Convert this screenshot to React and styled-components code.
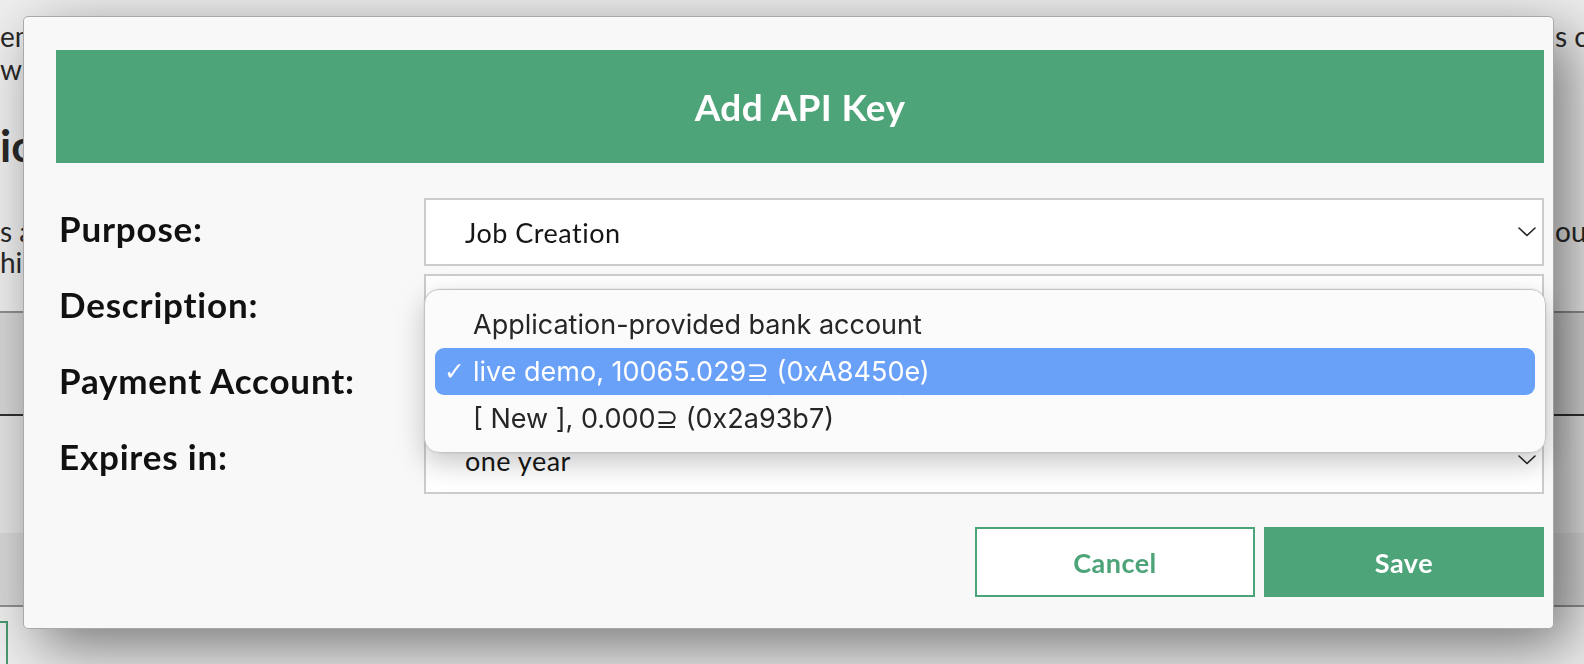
import React from "react";
import styled, { createGlobalStyle } from "styled-components";

const GlobalStyle = createGlobalStyle`
  html, body {
    margin: 0;
    padding: 0;
    height: 100%;
    overflow: hidden;
    background: #fff;
  }
  body {
    font-family: Lato, "Liberation Sans", sans-serif;
  }
`;

const green = "#4ea479";

/* ---------- page behind the dialog ---------- */

const Page = styled.div`
  width: 1584px;
  height: 664px;
  overflow: hidden;
  color: #2c2c2c;
  font-size: 28px;
  padding-top: 20px;
  box-sizing: border-box;
`;

const TextLine = styled.div`
  display: grid;
  grid-template-columns: 1555px 1fr;
  white-space: nowrap;
  overflow: hidden;
  line-height: ${(p) => p.$lh || 33}px;
  font-size: ${(p) => p.$size || 28}px;
  font-weight: ${(p) => (p.$bold ? 700 : 400)};
  margin-top: ${(p) => p.$mt || 0}px;
  span {
    overflow: hidden;
  }
`;

const TableTop = styled.div`
  margin-top: 33px;
  border-top: 2px solid #9a9a9a;
  height: 101px;
  background: #e6e6e6;
  border-bottom: 2px solid #333;
`;

const TableRow = styled.div`
  height: ${(p) => p.$h}px;
  background: ${(p) => p.$bg};
  border-bottom: ${(p) => (p.$line ? "2px solid #9a9a9a" : "none")};
`;

const PageButton = styled.div`
  margin-top: 14px;
  margin-left: -120px;
  width: 124px;
  height: 60px;
  border: 2px solid ${green};
  background: #fff;
`;

/* ---------- dialog ---------- */

const Backdrop = styled.div`
  position: fixed;
  inset: 0;
  background: rgba(0, 0, 0, 0.07);
`;

const Modal = styled.div`
  position: fixed;
  top: 16px;
  left: 23px;
  width: 1531px;
  box-sizing: border-box;
  background: #f8f8f8;
  border: 1px solid #a9a9a9;
  border-radius: 5px;
  padding: 33px 9px 31px 32px;
  box-shadow: 16px 18px 60px rgba(0, 0, 0, 0.5);
  display: flex;
  flex-direction: column;
`;

const Header = styled.div`
  height: 113px;
  background: ${green};
  color: #fff;
  font-weight: 700;
  font-size: 37px;
  letter-spacing: 0.4px;
  display: flex;
  align-items: center;
  justify-content: center;
`;

const Form = styled.div`
  margin-top: 35px;
  display: grid;
  grid-template-columns: 368px 1fr;
  row-gap: 8px;
`;

const Label = styled.div`
  display: flex;
  align-items: center;
  padding-left: 3px;
  font-weight: 700;
  font-size: 35px;
  letter-spacing: 0.8px;
  color: #111;
  padding-bottom: 8px;
`;

const Field = styled.div`
  position: relative;
  height: 68px;
  box-sizing: border-box;
  background: #fff;
  border: 2px solid #cbcbcb;
  display: flex;
  align-items: center;
  justify-content: space-between;
  padding: 0 6px 0 39px;
  font-size: 27px;
  letter-spacing: 0.5px;
  color: #161616;
`;

const Chevron = () => (
  <svg width="18" height="10" viewBox="0 0 18 10">
    <polyline
      points="1,1 9,8.5 17,1"
      fill="none"
      stroke="#222"
      strokeWidth="1.6"
      strokeLinecap="round"
      strokeLinejoin="round"
    />
  </svg>
);

const Menu = styled.div`
  position: absolute;
  top: -63px;
  left: -2px;
  width: 1122px;
  box-sizing: border-box;
  padding: 11px 10px 10px;
  background: rgba(251, 251, 251, 0.98);
  border: 1px solid #c4c4c4;
  border-radius: 15px;
  box-shadow: 0 10px 28px rgba(0, 0, 0, 0.22), 0 0 2px rgba(0, 0, 0, 0.15);
  font-family: Inter, "Noto Sans", "DejaVu Sans", sans-serif;
  font-size: 27px;
  letter-spacing: 0;
  z-index: 2;
`;

const MenuItem = styled.div`
  height: 47px;
  display: flex;
  align-items: center;
  padding-left: 9px;
  border-radius: 9px;
  color: ${(p) => (p.$active ? "#fff" : "#262626")};
  background: ${(p) => (p.$active ? "#69a0f8" : "transparent")};
  white-space: nowrap;
`;

const Check = styled.span`
  width: 29px;
  flex: none;
  font-family: "DejaVu Sans", sans-serif;
  font-size: 25px;
  font-weight: 700;
`;

const Actions = styled.div`
  margin-top: 33px;
  display: flex;
  justify-content: flex-end;
  gap: 9px;
`;

const Button = styled.button`
  width: 280px;
  height: 70px;
  box-sizing: border-box;
  font-family: Lato, "Liberation Sans", sans-serif;
  font-weight: 700;
  font-size: 27px;
  letter-spacing: 0.5px;
  cursor: pointer;
  border: 2px solid ${green};
  color: ${(p) => (p.$primary ? "#fff" : green)};
  background: ${(p) => (p.$primary ? green : "#fff")};
`;

const accounts = [
  { label: "Application-provided bank account" },
  { label: "live demo, 10065.029\u2287 (0xA8450e)", active: true },
  { label: "[ New ], 0.000\u2287 (0x2a93b7)" },
];

export default function App() {
  return (
    <>
      <GlobalStyle />
      <Page>
        <TextLine>
          <span>employees, contractors and clients see this</span>
          <span>s can</span>
        </TextLine>
        <TextLine>
          <span>which are used by the application</span>
          <span></span>
        </TextLine>
        <TextLine $bold $size={44} $lh={50} $mt={34}>
          <span>ications</span>
          <span></span>
        </TextLine>
        <TextLine $lh={31} $mt={46}>
          <span>s allow an application to act on your behalf</span>
          <span>ou</span>
        </TextLine>
        <TextLine $lh={31}>
          <span>hin the limits of the chosen purpose</span>
          <span></span>
        </TextLine>
        <TableTop />
        <TableRow $h={117} $bg="#f4f4f4" />
        <TableRow $h={72} $bg="#e8e8e8" $line />
        <PageButton />
      </Page>

      <Backdrop />

      <Modal>
        <Header>Add API Key</Header>
        <Form>
          <Label>Purpose:</Label>
          <Field>
            <span>Job Creation</span>
            <Chevron />
          </Field>

          <Label>Description:</Label>
          <Field />

          <Label>Payment Account:</Label>
          <Field>
            <span>live demo, 10065.029⊇ (0xA8450e)</span>
            <Chevron />
            <Menu>
              {accounts.map((a) => (
                <MenuItem key={a.label} $active={a.active}>
                  <Check>{a.active ? "✓" : ""}</Check>
                  {a.label}
                </MenuItem>
              ))}
            </Menu>
          </Field>

          <Label>Expires in:</Label>
          <Field>
            <span>one year</span>
            <Chevron />
          </Field>
        </Form>
        <Actions>
          <Button>Cancel</Button>
          <Button $primary>Save</Button>
        </Actions>
      </Modal>
    </>
  );
}
